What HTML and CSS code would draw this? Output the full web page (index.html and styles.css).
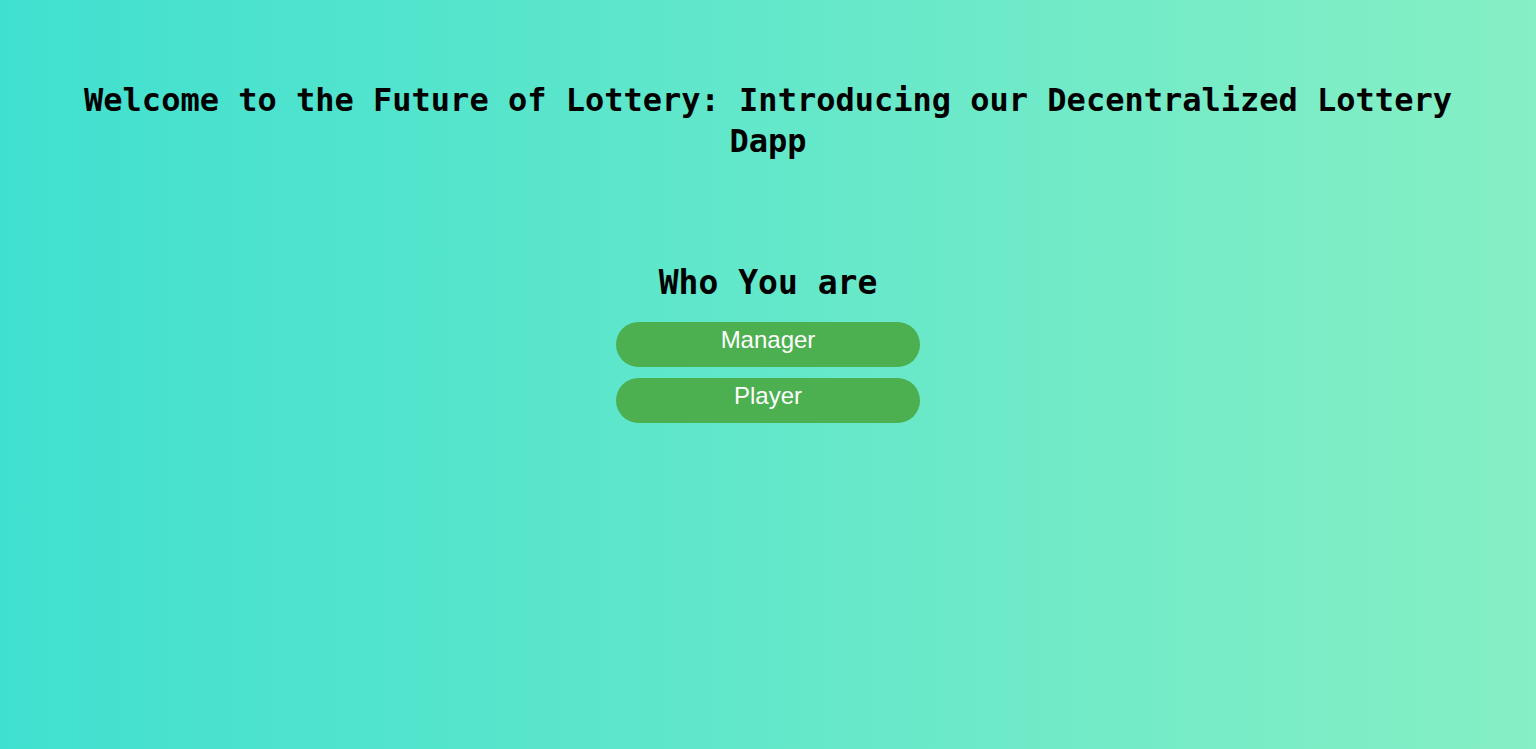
FILE: index.html
```html
<!DOCTYPE html>
<html lang="en">
<head>
<meta charset="utf-8">
<title>Decentralized Lottery Dapp</title>
<link rel="stylesheet" href="styles.css">
</head>
<body>
<main class="page">
  <h1 class="title">Welcome to the Future of Lottery: Introducing our Decentralized Lottery Dapp</h1>
  <section class="role">
    <h2 class="role-title">Who You are</h2>
    <div class="role-buttons">
      <button class="role-btn" type="button">Manager</button>
      <button class="role-btn" type="button">Player</button>
    </div>
  </section>
</main>
</body>
</html>
```
FILE: styles.css
```css
html, body {
  margin: 0;
  padding: 0;
}

body {
  min-height: 100vh;
  background: linear-gradient(to right, #40e0d0, #86efc4);
  font-family: "DejaVu Sans Mono", "Liberation Mono", monospace;
  color: #000;
}

.page {
  display: flex;
  flex-direction: column;
  align-items: center;
  padding-top: 80px;
}

.title {
  margin: 0;
  padding: 0 50px;
  font-size: 32px;
  line-height: 41px;
  font-weight: bold;
  text-align: center;
}

.role {
  display: flex;
  flex-direction: column;
  align-items: center;
  margin-top: 102px;
}

.role-title {
  margin: 0;
  font-size: 33px;
  line-height: 38px;
  font-weight: bold;
}

.role-buttons {
  display: flex;
  flex-direction: column;
  gap: 11px;
  margin-top: 20px;
}

.role-btn {
  width: 304px;
  height: 45px;
  padding: 4px 0 0;
  border: none;
  border-radius: 23px;
  background: #4caf50;
  color: #fff;
  font-family: "Liberation Sans", Arial, sans-serif;
  font-size: 24px;
  line-height: 28px;
  text-align: center;
  display: flex;
  justify-content: center;
  align-items: flex-start;
  cursor: pointer;
}
```
